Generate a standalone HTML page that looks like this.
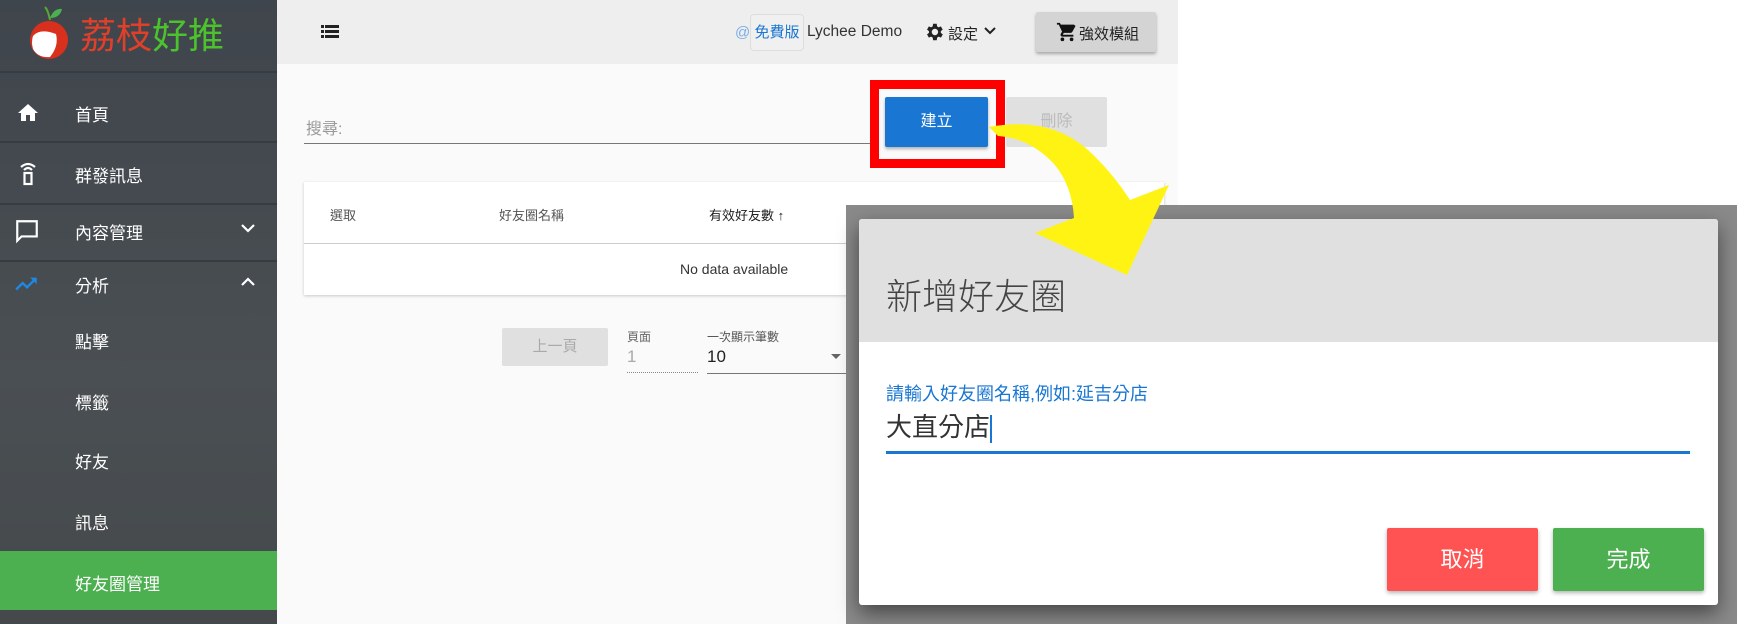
<!DOCTYPE html>
<html><head><meta charset="utf-8"><style>
*{margin:0;padding:0;box-sizing:border-box}
body{width:1737px;height:624px;overflow:hidden;position:relative;background:#fff;font-family:"Liberation Sans","Noto Sans CJK TC",sans-serif}
.a{position:absolute}
.side{left:0;top:0;width:277px;height:624px;background:linear-gradient(180deg,#3f454c,#4a4f53 60%,#45494c)}
.div{left:0;width:277px;height:2px;background:#383c41}
.mi{color:#fff;font-size:17px;left:75px}
.hdr{left:277px;top:0;width:901px;height:64px;background:#eeeeee}
.main{left:277px;top:64px;width:901px;height:560px;background:#fafafa}
</style></head><body>
<div class="a side"></div>
<div class="a div" style="top:71px"></div>
<div class="a div" style="top:141px"></div>
<div class="a div" style="top:203px"></div>
<div class="a div" style="top:260px"></div>
<!-- logo -->
<svg class="a" style="left:28px;top:4px" width="42" height="58" viewBox="0 0 42 58">
<path d="M22 16 Q20 6 17 3" stroke="#5a3" stroke-width="2" fill="none"/>
<path d="M22 14 Q26 4 34 5 Q32 14 22 14Z" fill="#4caf50"/>
<circle cx="21" cy="36" r="19" fill="#d8301c"/>
<path d="M5 32 Q12 24 28 30 Q31 42 22 53 Q10 54 5 45 Q3 38 5 32Z" fill="#fff"/>
</svg>
<div class="a" style="left:80px;top:13px;font-size:36px;line-height:40px;font-family:'Noto Sans CJK TC',sans-serif"><span style="color:#e0402a">荔枝</span><span style="color:#4cc22d">好推</span></div>
<!-- icons -->
<svg class="a" style="left:16px;top:101px" width="24" height="24" viewBox="0 0 24 24"><path d="M10 20v-6h4v6h5v-8h3L12 3 2 12h3v8z" fill="#fff"/></svg>
<svg class="a" style="left:16px;top:160px" width="24" height="26" viewBox="0 0 24 26"><path d="M5 7 Q12 1 19 7M8 10 Q12 6 16 10" stroke="#fff" stroke-width="2.2" fill="none"/><rect x="8.5" y="13" width="7" height="11" stroke="#fff" stroke-width="2.2" fill="none"/></svg>
<svg class="a" style="left:14px;top:218px" width="26" height="26" viewBox="0 0 24 24"><path d="M3 3h18v14H7l-4 4z" stroke="#fff" stroke-width="2" fill="none"/></svg>
<svg class="a" style="left:14px;top:272px" width="26" height="22" viewBox="0 0 24 20"><path d="M2 16l6-6 4 4 8-8" stroke="#1e88e5" stroke-width="2.2" fill="none"/><path d="M15 5h6v6z" fill="#1e88e5"/></svg>
<div class="a mi" style="top:101px">首頁</div>
<div class="a mi" style="top:162px">群發訊息</div>
<div class="a mi" style="top:219px">內容管理</div>
<div class="a mi" style="top:272px">分析</div>
<svg class="a" style="left:240px;top:222px" width="16" height="12"><path d="M2 3l6 6 6-6" stroke="#fff" stroke-width="2.2" fill="none"/></svg>
<svg class="a" style="left:240px;top:276px" width="16" height="12"><path d="M2 9l6-6 6 6" stroke="#fff" stroke-width="2.2" fill="none"/></svg>
<div class="a mi" style="top:328px">點擊</div>
<div class="a mi" style="top:389px">標籤</div>
<div class="a mi" style="top:448px">好友</div>
<div class="a mi" style="top:509px">訊息</div>
<div class="a" style="left:0;top:551px;width:277px;height:59px;background:#4caf50"></div>
<div class="a mi" style="top:570px">好友圈管理</div>
<!-- header -->
<div class="a hdr"></div>
<div class="a main"></div>
<svg class="a" style="left:321px;top:24px" width="18" height="16" viewBox="0 0 18 16"><g fill="#222"><rect x="0" y="1" width="3" height="3"/><rect x="4" y="1" width="14" height="3"/><rect x="0" y="6" width="3" height="3"/><rect x="4" y="6" width="14" height="3"/><rect x="0" y="11" width="3" height="3"/><rect x="4" y="11" width="14" height="3"/></g></svg>
<div class="a" style="left:735px;top:24px;font-size:15px;color:#7aaee8">@</div>
<div class="a" style="left:750px;top:14px;width:54px;height:37px;border:1px solid #ddd;border-radius:4px;background:#f0f0f0;font-size:15px;color:#1976d2;text-align:center;line-height:35px">免費版</div>
<div class="a" style="left:807px;top:23px;font-size:15.5px;color:#333">Lychee Demo</div>
<svg class="a" style="left:923px;top:21px" width="22" height="22" viewBox="0 0 24 24"><path fill="#222" d="M19.4 13a7.5 7.5 0 000-2l2.1-1.6-2-3.5-2.5 1a7 7 0 00-1.7-1L15 3h-4l-.4 2.9a7 7 0 00-1.7 1l-2.5-1-2 3.5L6.5 11a7.5 7.5 0 000 2l-2.1 1.6 2 3.5 2.5-1a7 7 0 001.7 1L11 21h4l.4-2.9a7 7 0 001.7-1l2.5 1 2-3.5zM13 15.5a3.5 3.5 0 110-7 3.5 3.5 0 010 7z"/></svg>
<div class="a" style="left:948px;top:23px;font-size:15px;color:#222">設定</div>
<svg class="a" style="left:983px;top:26px" width="14" height="10"><path d="M2 2l5 5 5-5" stroke="#222" stroke-width="2" fill="none"/></svg>
<div class="a" style="left:1036px;top:12px;width:120px;height:40px;background:#d4d4d4;box-shadow:0 2px 3px rgba(0,0,0,.3);border-radius:2px"></div>
<svg class="a" style="left:1056px;top:21px" width="22" height="22" viewBox="0 0 24 24"><path fill="#111" d="M7 18a2 2 0 100 4 2 2 0 000-4zM1 2v2h2l3.6 7.6-1.4 2.4A2 2 0 007 17h12v-2H7.4l1.1-2h7.5a2 2 0 001.7-1l3.6-6.5L19.6 4H5.2l-.9-2zM17 18a2 2 0 100 4 2 2 0 000-4z"/></svg>
<div class="a" style="left:1079px;top:23px;font-size:15px;color:#222">強效模組</div>
<!-- search -->
<div class="a" style="left:306px;top:115px;font-size:16px;color:#999">搜尋:</div>
<div class="a" style="left:304px;top:143px;width:566px;height:1px;background:#777"></div>
<div class="a" style="left:870px;top:80px;width:135px;height:88px;border:9px solid #f00"></div>
<div class="a" style="left:885px;top:97px;width:103px;height:50px;background:#1976d2;color:#fff;font-size:16px;text-align:center;line-height:50px;box-shadow:0 2px 3px rgba(0,0,0,.3);border-radius:2px">建立</div>
<div class="a" style="left:1006px;top:97px;width:101px;height:50px;background:#e0e0e0;color:#bbb;font-size:16px;text-align:center;line-height:50px;border-radius:2px">刪除</div>
<!-- table -->
<div class="a" style="left:304px;top:182px;width:860px;height:113px;background:#fff;box-shadow:0 1px 3px rgba(0,0,0,.2)"></div>
<div class="a" style="left:304px;top:243px;width:860px;height:1px;background:#ccc"></div>
<div class="a" style="left:330px;top:205px;font-size:13px;color:#555">選取</div>
<div class="a" style="left:499px;top:205px;font-size:13px;color:#555">好友圈名稱</div>
<div class="a" style="left:709px;top:205px;font-size:13px;color:#222">有效好友數 ↑</div>
<div class="a" style="left:680px;top:261px;font-size:14px;color:#333">No data available</div>
<!-- pagination -->
<div class="a" style="left:502px;top:328px;width:106px;height:38px;background:#e0e0e0;color:#aaa;font-size:15px;text-align:center;line-height:38px;border-radius:2px">上一頁</div>
<div class="a" style="left:627px;top:328px;font-size:12px;color:#666">頁面</div>
<div class="a" style="left:627px;top:347px;font-size:17px;color:#aaa">1</div>
<div class="a" style="left:627px;top:372px;width:71px;border-top:1px dotted #888"></div>
<div class="a" style="left:707px;top:328px;font-size:12px;color:#555">一次顯示筆數</div>
<div class="a" style="left:707px;top:347px;font-size:17px;color:#222">10</div>
<svg class="a" style="left:831px;top:354px" width="10" height="6"><path d="M0 0h10L5 5z" fill="#666"/></svg>
<div class="a" style="left:707px;top:373px;width:141px;height:1px;background:#777"></div>
<!-- overlay & modal -->
<div class="a" style="left:846px;top:205px;width:891px;height:419px;background:#8a8a8a"></div>
<div class="a" style="left:859px;top:219px;width:859px;height:386px;background:#fff;border-radius:3px;box-shadow:0 8px 20px rgba(0,0,0,.5);overflow:hidden">
<div style="height:123px;background:#e0e0e0"></div>
</div>
<div class="a" style="left:886px;top:268px;font-size:36px;color:#444;font-family:'Noto Sans CJK TC',sans-serif;font-weight:300">新增好友圈</div>
<div class="a" style="left:886px;top:380px;font-size:18px;color:#1976d2">請輸入好友圈名稱,例如:延吉分店</div>
<div class="a" style="left:886px;top:411px;font-size:26px;color:#333;line-height:32px">大直分店<span style="display:inline-block;width:2px;height:28px;background:#1976d2;vertical-align:middle"></span></div>
<div class="a" style="left:886px;top:451px;width:804px;height:3px;background:#1976d2"></div>
<div class="a" style="left:1387px;top:528px;width:151px;height:63px;background:#ff5252;color:#fff;font-size:22px;text-align:center;line-height:63px;border-radius:2px;box-shadow:0 2px 4px rgba(0,0,0,.3)">取消</div>
<div class="a" style="left:1553px;top:528px;width:151px;height:63px;background:#4caf50;color:#fff;font-size:22px;text-align:center;line-height:63px;border-radius:2px;box-shadow:0 2px 4px rgba(0,0,0,.3)">完成</div>
<!-- arrow -->
<svg class="a" style="left:0;top:0" width="1737" height="624"><path fill="#fff314" d="M989 127 Q1050 116 1088 150 Q1112 172 1130 200 L1169 185 L1127 275 L1035 233 L1074 218 Q1072 185 1054 164 Q1030 138 998 136 Z"/></svg>
</body></html>
